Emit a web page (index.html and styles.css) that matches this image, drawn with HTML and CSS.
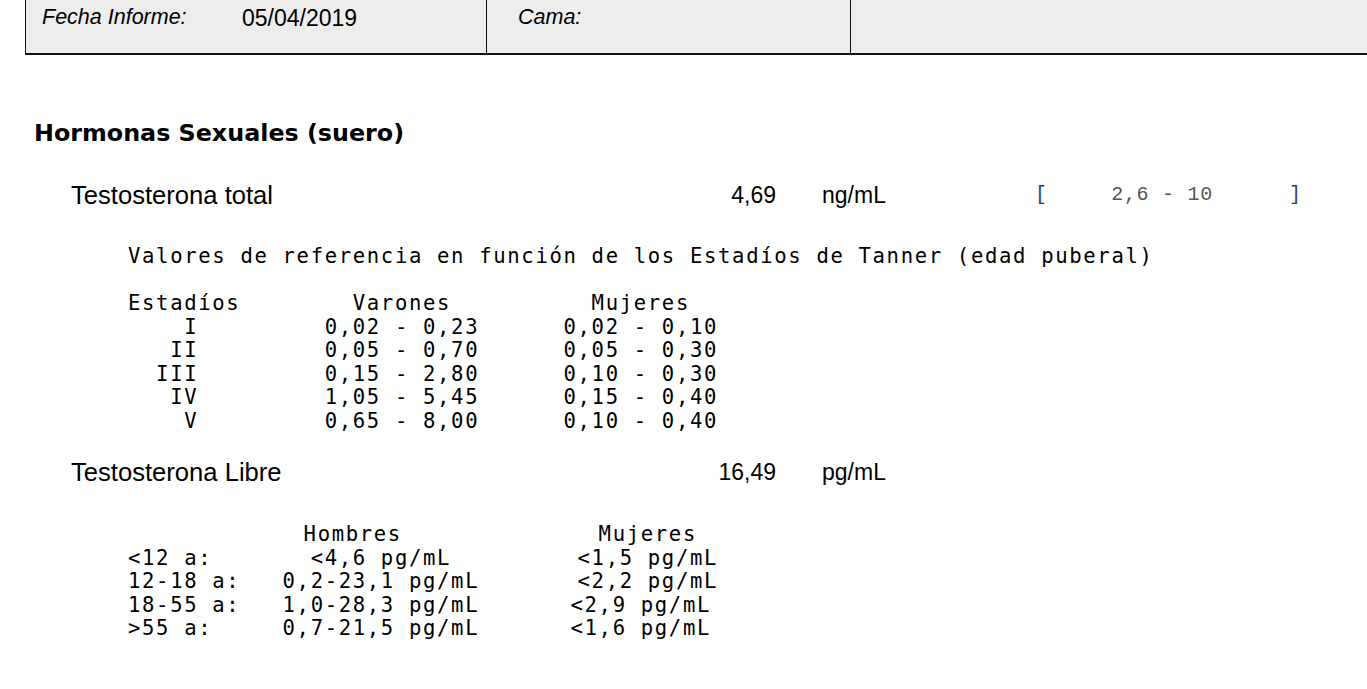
FILE: index.html
```html
<!DOCTYPE html>
<html lang="es">
<head>
  <meta charset="UTF-8">
  <title>Informe de laboratorio</title>
  <link rel="stylesheet" href="styles.css">
</head>
<body>
  <div class="info-bar">
    <div class="info-cell first">
      <span class="info-label">Fecha Informe:</span>
      <span class="info-value">05/04/2019</span>
    </div>
    <div class="info-cell second">
      <span class="info-label">Cama:</span>
    </div>
    <div class="info-cell third"></div>
  </div>

  <section class="report">
    <h2 class="section-title">Hormonas Sexuales (suero)</h2>

    <div class="result first-result">
      <span class="test-name">Testosterona total</span>
      <span class="test-value">4,69</span>
      <span class="test-unit">ng/mL</span>
      <span class="test-range"><span class="bracket">[</span>     2,6 - 10      <span class="bracket">]</span></span>
    </div>

    <div class="ref-note">
      <span class="ref-line">Valores de referencia en función de los Estadíos de Tanner (edad puberal)</span>
      <span class="ref-line"> </span>
      <span class="ref-line">Estadíos        Varones          Mujeres</span>
      <span class="ref-line">    I         0,02 - 0,23      0,02 - 0,10</span>
      <span class="ref-line">   II         0,05 - 0,70      0,05 - 0,30</span>
      <span class="ref-line">  III         0,15 - 2,80      0,10 - 0,30</span>
      <span class="ref-line">   IV         1,05 - 5,45      0,15 - 0,40</span>
      <span class="ref-line">    V         0,65 - 8,00      0,10 - 0,40</span>
    </div>

    <div class="result">
      <span class="test-name">Testosterona Libre</span>
      <span class="test-value">16,49</span>
      <span class="test-unit">pg/mL</span>
      <span class="test-range"></span>
    </div>

    <div class="ref-note second-note">
      <span class="ref-line shift">            Hombres              Mujeres</span>
      <span class="ref-line">&lt;12 a:       &lt;4,6 pg/mL         &lt;1,5 pg/mL</span>
      <span class="ref-line">12-18 a:   0,2-23,1 pg/mL       &lt;2,2 pg/mL</span>
      <span class="ref-line">18-55 a:   1,0-28,3 pg/mL      <span class="half">&lt;2,9 pg/mL</span></span>
      <span class="ref-line">&gt;55 a:     0,7-21,5 pg/mL      <span class="half">&lt;1,6 pg/mL</span></span>
    </div>
  </section>
</body>
</html>
```

FILE: styles.css
```css
body {
  margin: 0;
  background: #fff;
  color: #000;
  font-family: 'Liberation Sans', Arial, sans-serif;
}
.info-bar {
  margin-left: 25px;
  height: 53px;
  display: grid;
  grid-template-columns: 461px 364px 1fr;
  background: #ededed;
  border-left: 1.5px solid #111;
  border-bottom: 2px solid #111;
}
.info-cell {
  display: flex;
  align-items: flex-start;
  padding-top: 5px;
}
.info-cell.first {
  padding-left: 16px;
  border-right: 1.5px solid #111;
}
.info-cell.second {
  padding-left: 31px;
  border-right: 1.5px solid #111;
}
.info-label {
  font-style: italic;
  font-size: 21.5px;
  line-height: 25px;
}
.info-cell.first .info-label {
  width: 200px;
}
.info-value {
  font-size: 23px;
  line-height: 27px;
}
.report {
  padding-top: 63px;
}
.section-title {
  margin: 0 0 0 34px;
  font-family: 'DejaVu Sans', Verdana, sans-serif;
  font-size: 23.8px;
  font-weight: bold;
  line-height: 30px;
}
.result {
  display: grid;
  grid-template-columns: 560px 145px 259px 1fr;
  padding-left: 71px;
  margin-top: 24px;
  align-items: center;
  font-size: 23px;
  line-height: 30px;
}
.result.first-result {
  margin-top: 32px;
}
.test-name {
  font-size: 25.6px;
}
.test-value {
  text-align: right;
}
.test-unit {
  padding-left: 46px;
}
.test-range {
  font-family: 'Liberation Mono', 'Courier New', monospace;
  font-size: 20px;
  color: #555;
  white-space: pre;
  letter-spacing: 0.7px;
}
.bracket {
  color: #2a3f73;
}
.ref-note {
  margin: 35px 0 0 128px;
  font-family: 'DejaVu Sans Mono', Consolas, monospace;
  font-size: 20.6px;
  letter-spacing: 1.65px;
}
.ref-line {
  display: block;
  height: 23.5px;
  line-height: 23.5px;
  white-space: pre;
}
.ref-note.second-note {
  margin-top: 36px;
}
.shift {
  padding-left: 7px;
}
.half {
  margin-left: 7px;
}
```
